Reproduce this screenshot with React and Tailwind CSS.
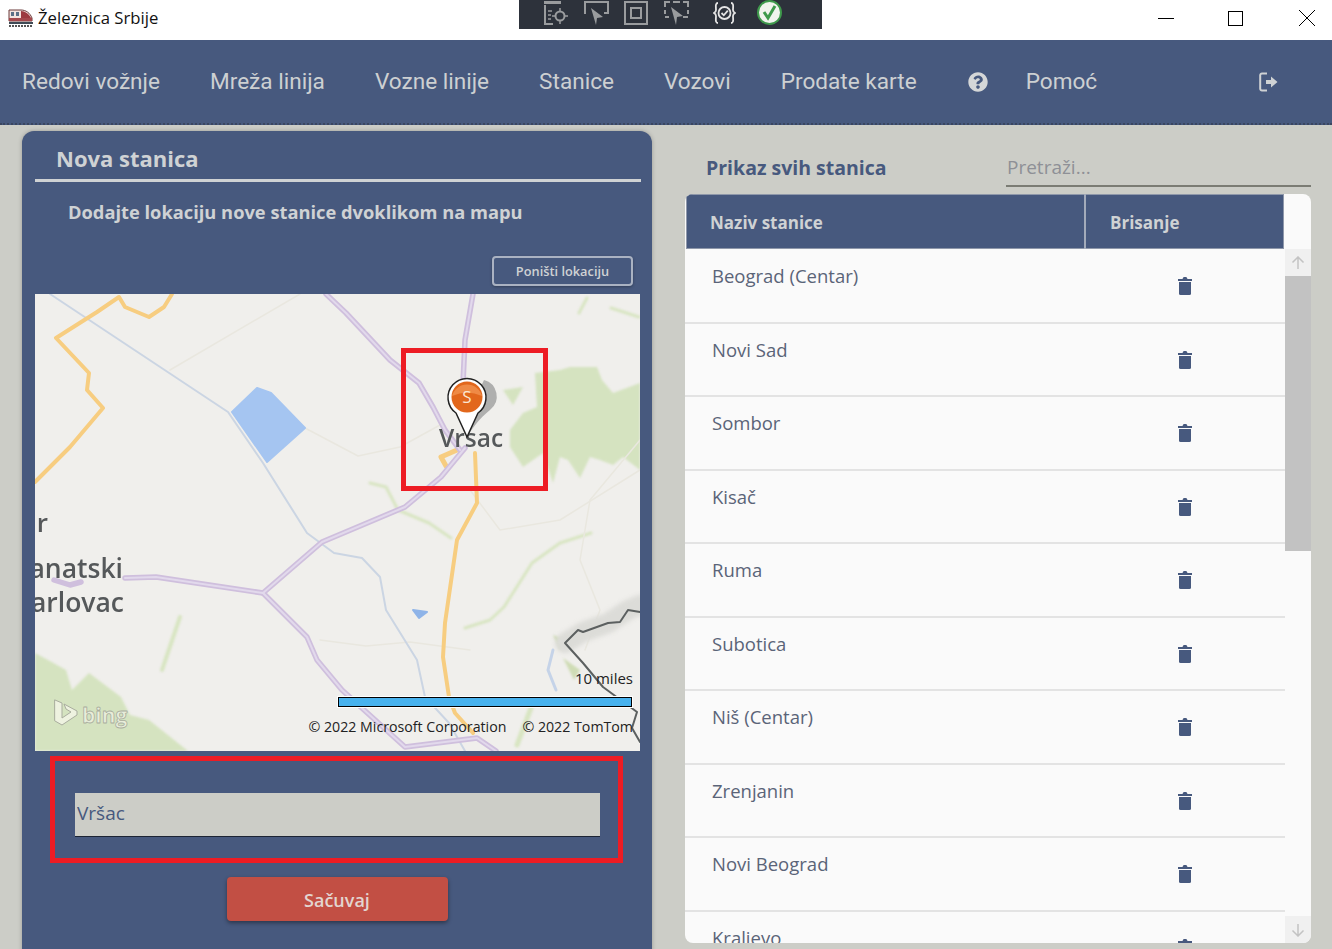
import React from "react";
import { FaQuestionCircle } from "react-icons/fa";

const stations = [
  "Beograd (Centar)",
  "Novi Sad",
  "Sombor",
  "Kisač",
  "Ruma",
  "Subotica",
  "Niš (Centar)",
  "Zrenjanin",
  "Novi Beograd",
  "Kraljevo",
];

const navItems = [
  "Redovi vožnje",
  "Mreža linija",
  "Vozne linije",
  "Stanice",
  "Vozovi",
  "Prodate karte",
];

function TrainIcon() {
  return (
    <svg width="25" height="19" viewBox="0 0 25 19" className="shrink-0">
      <path d="M1 1h12c5 0 9 3 11 8v3H1z" fill="#f3e3df" stroke="#6b3b3b" strokeWidth="1" />
      <path d="M13 2c4 0 8 3 10 7H13z" fill="#9c3a3f" />
      <path d="M1 9h23v3H1z" fill="#a5484c" />
      <rect x="3" y="3" width="3" height="4" fill="#5c6f86" />
      <rect x="8" y="3" width="3" height="4" fill="#5c6f86" />
      <rect x="1" y="13" width="24" height="2" fill="#3e4a55" />
      <path d="M1 17h24" stroke="#555" strokeWidth="2" strokeDasharray="2 1" />
    </svg>
  );
}

function DocTargetIcon() {
  return (
    <svg width="24" height="24" viewBox="0 0 24 24" fill="none" stroke="#9a9c9e" strokeWidth="2">
      <path d="M1 0h15v2H1z" fill="#9a9c9e" />
      <path d="M1 4v19h8" />
      <path d="M4 10h4M4 14h3M4 18h3" strokeWidth="1.5" />
      <circle cx="16" cy="15" r="4.5" />
      <path d="M16 7v4M16 19v4M8 15h4M20 15h4" strokeWidth="1.5" />
    </svg>
  );
}

function SelectIcon() {
  return (
    <svg width="25" height="24" viewBox="0 0 25 24" fill="none" stroke="#9a9c9e" strokeWidth="2">
      <path d="M1 13V1h23v11h-4" />
      <path d="M7 7l12 9-6 1-1 7z" fill="#9a9c9e" stroke="none" />
    </svg>
  );
}

function SquareIcon() {
  return (
    <svg width="24" height="24" viewBox="0 0 24 24" fill="none" stroke="#9a9c9e" strokeWidth="2">
      <rect x="1" y="1" width="22" height="22" />
      <rect x="7" y="7" width="10" height="10" />
    </svg>
  );
}

function FrameSelectIcon() {
  return (
    <svg width="25" height="24" viewBox="0 0 25 24" fill="none" stroke="#9a9c9e" strokeWidth="2">
      <path d="M1 6V1h5M9 1h7M19 1h5v5M24 9v4M24 16h-5M1 9v4M1 16h4" />
      <path d="M7 6l12 9-6 1-1 8z" fill="#9a9c9e" stroke="none" />
    </svg>
  );
}

function BindingIcon() {
  return (
    <svg width="23" height="22" viewBox="0 0 23 22" fill="none" stroke="#e4e4e4" strokeWidth="1.8">
      <path d="M5 1C2 1 3 5 3 8c0 2-2 3-2 3s2 1 2 3c0 3-1 7 2 7" />
      <path d="M18 1c3 0 2 4 2 7 0 2 2 3 2 3s-2 1-2 3c0 3 1 7-2 7" />
      <circle cx="11.5" cy="11" r="6" />
      <path d="M8.5 11l2.3 2.3 4-4.6" />
    </svg>
  );
}

function CheckIcon() {
  return (
    <svg width="25" height="25" viewBox="0 0 25 25" fill="none">
      <circle cx="12.5" cy="12.5" r="11.5" fill="#f1f4ee" stroke="#3f9a4c" strokeWidth="2" />
      <path d="M7 12l4 6 7-12" stroke="#3f9a4c" strokeWidth="3" />
    </svg>
  );
}

function LogoutIcon() {
  return (
    <svg width="19" height="20" viewBox="0 0 19 20" fill="none">
      <path d="M8 1.5H3A1.8 1.8 0 0 0 1.2 3.3v13.4A1.8 1.8 0 0 0 3 18.5h5" stroke="#cfd2d4" strokeWidth="2" />
      <path d="M7 8h5V4.5l6.5 5.5-6.5 5.5V12H7z" fill="#cfd2d4" />
    </svg>
  );
}

function TrashIcon() {
  return (
    <svg width="14" height="18" viewBox="0 0 14 18" fill="#47597e">
      <path d="M0 2h4.5l.7-1.5q.2-.5.8-.5h2q.6 0 .8.5L9.5 2H14v2H0z" />
      <path d="M1 5h12v11.5a1.5 1.5 0 0 1-1.5 1.5h-9A1.5 1.5 0 0 1 1 16.5z" />
    </svg>
  );
}

function MapDrawing() {
  return (
    <svg viewBox="35 294 605 457" className="absolute inset-0 h-full w-full" fill="none" strokeLinejoin="round" strokeLinecap="round">
      <rect x="35" y="294" width="605" height="457" fill="#f0efec" />

      {/* forest and green patches */}
      <g className="blur-[1px]">
        <path d="M510 430L523 413 537 407 535 373 560 370 570 367 597 367 602 380 613 393 640 383V470L623 457 613 465 600 460 590 457 580 478 568 460 560 457 553 483 543 453 523 467 510 447z" fill="#d5e3c0" />
        <path d="M503 390L523 387 513 405z" fill="#d5e3c0" />
        <path d="M35 653L48 660 66 670 72 690 89 673 121 697 130 715 149 720 188 751H35z" fill="#d5e3c0" />
        <path d="M553 635L566 640 560 650z" fill="#cfdcb5" />
        <path d="M563 658L580 670 574 680z" fill="#cfdcb5" />
        <g stroke="#d8e5c2" strokeWidth="3">
          <path d="M370 483L386 487 398 510 429 523 451 538" />
          <path d="M465 628L490 620 504 607 532 563 560 543 591 533" />
          <path d="M180 617L162 670" strokeWidth="4" />
          <path d="M611 308L639 317M587 298L579 313" />
          <path d="M517 745L534 700" strokeWidth="5" />
        </g>
      </g>

      {/* thin grey roads */}
      <g stroke="#e9e7df" strokeWidth="1.5">
        <path d="M170 370L300 294" />
        <path d="M305 428L358 456 400 447 440 425" />
        <path d="M320 640L366 646 410 642 470 650" />
        <path d="M585 650L600 610 580 560 590 500 640 440" />
        <path d="M470 490L500 530 560 520 640 470" />
      </g>

      {/* water */}
      <g className="blur-[0.5px]">
        <path d="M50 294L228 412 263 463 307 533 334 553 362 558 380 577 386 610 417 660 425 697 449 723 465 751" stroke="#cbd5e3" strokeWidth="2" />
        <path d="M232 412L257 388 271 393 305 428 267 462z" fill="#a5c5f1" stroke="#a5c5f1" strokeWidth="2" />
        <path d="M413 610L427 612 419 618z" fill="#8fb4e8" stroke="#8fb4e8" strokeWidth="2" />
        <path d="M553 650L548 670 556 690" stroke="#c5d3e8" strokeWidth="3" />
      </g>

      {/* border in the corner */}
      <path d="M565 643L583 632 608 623 628 610 640 605" stroke="#dcdcd8" strokeWidth="20" className="blur-[2px]" />
      <path d="M640 612L628 610 620 622 608 623 583 632 578 630 565 643 583 663 603 687 637 712 632 728 640 742" stroke="#5c6060" strokeWidth="2" className="blur-[0.5px]" />

      {/* yellow roads */}
      <g stroke="#f7cd80" strokeWidth="4" className="blur-[0.5px]">
        <path d="M172 294L164 307 149 317 125 307 119 297 97 312 56 338 89 373 87 390 103 408 70 447 35 482" />
        <path d="M475 453L477 503 457 540 445 623 443 657 449 697 455 713 473 733" />
        <path d="M441 457L457 450M441 457L446 466" strokeWidth="5" />
      </g>

      {/* purple roads */}
      <g stroke="#cfbfdd" strokeWidth="5.5" className="blur-[0.5px]">
        <path d="M326 294L346 313 390 360 419 383 433 407 445 430 460 450" />
        <path d="M473 294L465 340 463 383 465 423" />
        <path d="M465 448L441 477 405 507 322 542 263 593 156 577 125 578" />
        <path d="M263 593L307 637 317 660 342 690 405 747 461 740 477 738 496 751" />
        <path d="M54 580L70 585 81 582" />
      </g>
      <g stroke="#e2d9ec" strokeWidth="2">
        <path d="M326 294L346 313 390 360 419 383 433 407 445 430 460 450" />
        <path d="M473 294L465 340 463 383 465 423" />
        <path d="M465 448L441 477 405 507 322 542 263 593 156 577 125 578" />
        <path d="M263 593L307 637 317 660 342 690 405 747 461 740 477 738 496 751" />
      </g>

      {/* place names */}
      <g fontFamily="'Open Sans', sans-serif" fill="#55585a" fontWeight="600" className="blur-[0.4px]">
        <text x="48" y="532" fontSize="26" textAnchor="end">ir</text>
        <text x="123" y="578" fontSize="26.5" textAnchor="end">anatski</text>
        <text x="124" y="612" fontSize="26.5" textAnchor="end">arlovac</text>
        <text x="439" y="447" fontSize="24.5">Vrsac</text>
      </g>

      {/* pin */}
      <path d="M484 380a17 17 0 0 1 6 30c-6 5-14 12-23 27l8-38z" fill="#9a9a9a" opacity="0.75" />
      <path d="M467 437L456 413A19 19 0 1 1 478 413z" fill="#fff" stroke="#222" strokeWidth="1.5" />
      <circle cx="467" cy="397" r="15.5" fill="#e2671c" />
      <path d="M452 396a15.5 15.5 0 0 1 30 0q-15-7-30 0z" fill="#ef8a45" />
      <text x="467" y="403" fontSize="17" textAnchor="middle" fill="#fbe6d3" fontFamily="'Open Sans', sans-serif">S</text>

      {/* bing logo */}
      <path d="M55 700l7 3v15l9-6-5-3-2-5 13 7v4l-15 10-7-4z" fill="#eef2e0" stroke="#a9ad9e" strokeWidth="1" />
      <text x="82" y="723" fontSize="21" fontWeight="700" fill="#e8edda" stroke="#a9ad9e" strokeWidth="0.8" fontFamily="'Open Sans', sans-serif">bing</text>
    </svg>
  );
}

export default function App() {
  return (
    <div className="flex h-[949px] w-[1332px] flex-col overflow-hidden bg-[#cccdc7] font-['Open_Sans',sans-serif]">
      {/* window title bar */}
      <div className="relative flex h-10 shrink-0 items-center bg-white pl-2 pb-1">
        <TrainIcon />
        <span className="ml-[5px] text-[16.7px] text-[#111]">Železnica Srbije</span>
        <div className="absolute left-[519px] top-0 flex h-[29px] w-[303px] items-center bg-[#2d323b] pb-1 pl-[25px]">
          <DocTargetIcon />
          <div className="ml-[16px]"><SelectIcon /></div>
          <div className="ml-[15px]"><SquareIcon /></div>
          <div className="ml-[16px]"><FrameSelectIcon /></div>
          <div className="ml-[24px]"><BindingIcon /></div>
          <div className="ml-[21px]"><CheckIcon /></div>
        </div>
        <div className="ml-auto flex items-center">
          <div className="mr-[54px] h-px w-4 bg-black" />
          <div className="mr-[56px] h-[15px] w-[15px] border border-black" />
          <svg width="16" height="16" viewBox="0 0 16 16" className="mr-[17px]" stroke="#000">
            <path d="M0 0l16 16M16 0L0 16" />
          </svg>
        </div>
      </div>

      {/* nav bar */}
      <nav className="flex h-[85px] shrink-0 items-center border-b-2 border-dotted border-[#3a4660] bg-[#47597e] pl-[22px] font-['Roboto',sans-serif] text-[22.6px] text-[#cdd0d2]">
        <div className="flex gap-[50px]">
          {navItems.map((item) => (
            <span key={item}>{item}</span>
          ))}
        </div>
        <FaQuestionCircle className="ml-[51px] text-[20px] text-[#d5d7d8]" />
        <span className="ml-[38px]">Pomoć</span>
        <div className="ml-auto mr-[54px]"><LogoutIcon /></div>
      </nav>

      <div className="flex min-h-0 flex-1 pl-[22px] pt-[6px]">
        {/* left panel */}
        <section className="flex h-[840px] w-[630px] shrink-0 flex-col rounded-xl bg-[#47597e] pl-[13px] pr-[11px] shadow-[0_0_4px_rgba(0,0,0,0.25)]">
          <h1 className="h-[51px] border-b-[3px] border-[#cfd2d4] pl-[21px] pt-[10px] text-[22px] leading-[34px] font-bold text-[#cfd2d4]">
            Nova stanica
          </h1>
          <p className="mt-[17px] pl-[33px] text-[18.3px] leading-[26px] font-bold text-[#cfd2d4]">
            Dodajte lokaciju nove stanice dvoklikom na mapu
          </p>
          <div className="mt-[31px] flex justify-end pr-[8px]">
            <button className="h-[30px] w-[141px] rounded border-2 border-[#aab2c2] pt-[2px] text-[12.8px] font-semibold text-[#cfd2d4] shadow-[0_1px_3px_rgba(0,0,0,0.3)]">
              Poništi lokaciju
            </button>
          </div>
          <div className="relative mt-2 h-[457px] w-[605px] shrink-0 overflow-hidden">
            <MapDrawing />
            <div className="absolute left-[366px] top-[54px] h-[143px] w-[147px] border-[5px] border-[#ed1c24]" />
            <span className="absolute right-[7px] top-[373px] text-[15px] text-[#222]">10 miles</span>
            <div className="absolute left-[303px] top-[403px] h-[10px] w-[294px] border border-black bg-[#47b2ee] outline outline-white" />
            <div className="absolute right-[7px] top-[422px] flex gap-4 text-[14.2px] whitespace-nowrap text-[#222]">
              <span>© 2022 Microsoft Corporation</span>
              <span>© 2022 TomTom</span>
            </div>
          </div>
          <div className="ml-[15px] mt-[5px] h-[107px] w-[573px] shrink-0 border-[5px] border-[#ed1c24] pl-5 pr-[18px] pt-[32px]">
            <input
              readOnly
              value="Vršac"
              className="h-[44px] w-full border-b border-[#1c2434] bg-[#cccdc7] pb-[3px] pl-[2px] text-[19px] text-[#47597e] outline-none"
            />
          </div>
          <div className="mt-[14px] flex justify-center pr-[2px]">
            <button className="h-[44px] w-[221px] rounded-sm bg-[#c24f44] pt-[3px] text-[18px] font-semibold text-[#e3d5d0] shadow-[0_2px_4px_rgba(0,0,0,0.4)]">
              Sačuvaj
            </button>
          </div>
        </section>

        {/* right panel */}
        <section className="ml-[33px] flex w-[626px] flex-col">
          <div className="flex h-[56px] items-end">
            <h2 className="w-[321px] pb-[5px] pl-[21px] text-[19.5px] leading-[28px] font-bold text-[#47597e]">
              Prikaz svih stanica
            </h2>
            <div className="h-[37px] w-[305px] border-b-2 border-[#7b7c74] pl-px text-[19px] leading-[34px] text-[#8e9096]">
              Pretraži...
            </div>
          </div>
          <div className="mt-[7px] flex h-[749px] overflow-hidden rounded-lg bg-[#fafafa]">
            <div className="w-[600px] shrink-0">
              <div className="ml-px mr-px flex h-[55px] items-center border border-[#8f98aa] bg-[#47597e] text-[17px] font-bold text-[#cfd2d4]">
                <span className="w-[399px] border-r-2 border-[#a3abba] pl-[23px] pt-[2px] leading-[53px]">Naziv stanice</span>
                <span className="pl-[24px] pt-[2px]">Brisanje</span>
              </div>
              <div className="pt-px">
                {stations.map((name) => (
                  <div key={name} className="flex h-[73.5px] border-b-2 border-[#e3e3e3] text-[#5a6478]">
                    <span className="w-[427px] pl-[27px] pt-[12px] text-[18.5px] leading-[28px]">{name}</span>
                    <span className="ml-[66px] pt-[27px]"><TrashIcon /></span>
                  </div>
                ))}
              </div>
            </div>
            <div className="flex w-[26px] flex-col pt-[55px]">
              <div className="flex h-[27px] items-center justify-center bg-[#f0f0f0] text-[#c3c3c3]">
                <svg width="14" height="14" viewBox="0 0 14 14" fill="none" stroke="currentColor" strokeWidth="1.5"><path d="M7 13V1M1.5 6.5L7 1l5.5 5.5" /></svg>
              </div>
              <div className="h-[275px] bg-[#c2c2c2]" />
              <div className="flex-1 bg-[#fafafa]" />
              <div className="flex h-[27px] items-center justify-center bg-[#f0f0f0] text-[#c3c3c3]">
                <svg width="14" height="14" viewBox="0 0 14 14" fill="none" stroke="currentColor" strokeWidth="1.5"><path d="M7 1v12M1.5 7.5L7 13l5.5-5.5" /></svg>
              </div>
            </div>
          </div>
        </section>
      </div>
    </div>
  );
}
